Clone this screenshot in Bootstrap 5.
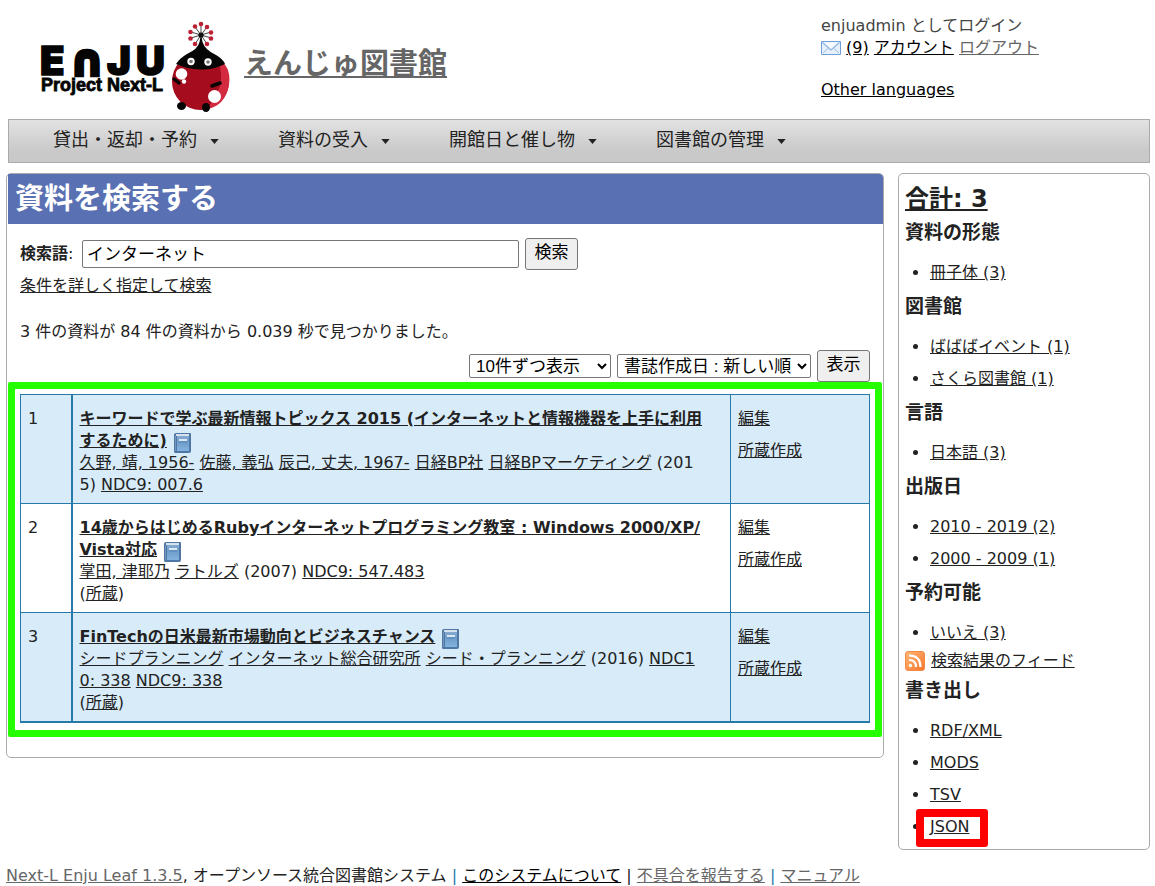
<!DOCTYPE html>
<html lang="ja">
<head>
<meta charset="utf-8">
<meta name="viewport" content="width=device-width, initial-scale=1">
<title>資料を検索する - えんじゅ図書館</title>
<link href="https://cdn.jsdelivr.net/npm/bootstrap@5.3.0/dist/css/bootstrap.min.css" rel="stylesheet">
<style>
  body { font-family: "DejaVu Sans", "Noto Sans CJK JP", sans-serif; font-size: 16px; line-height: 22px; color: #222; background: #fff; }
  a { color: #222; }
  a:hover { color: #2779aa; }
  .page-wrap { padding: 0 5px 0 6px; }
  .site-head { height: 119px; }
  .site-logo { width: 238px; height: 100px; margin-top: 15px; }
  .site-title { font-size: 29px; line-height: 40px; font-weight: 700; margin-top: 44px; }
  .site-title a, .muted-link { color: #666; }
  .user-box { width: 329px; padding-top: 15px; color: #444; }
  .user-box a:not(.muted-link), .dark-link { color: #000; }
  .lang-link { margin-top: 20px; }
  .mail-icon { width: 20px; height: 14px; vertical-align: -2px; }
  .menu-bar { margin-left: 2px; height: 44px; padding: 0 44px; gap: 59px; border: 1px solid #aaa; background: linear-gradient(#e2e2e2, #c9c9c9 75%); font-size: 18px; }
  .menu-bar button { border: 0; background: none; padding: 0 0 3px; color: #222; gap: 13px; }
  .menu-bar svg { width: 9px; height: 5px; margin-top: 3px; }
  .body-row { margin-top: 10px; gap: 14px; }
  .panel { border: 1px solid #aaa; border-radius: 5px; }
  .main-panel { padding: 0 0 34px 1px; }
  .page-title { background: #5970b2; color: #fff; font-size: 29px; line-height: 50px; font-weight: 700; padding-left: 7px; border-top-right-radius: 4px; }
  .content-area { padding: 14px 13px 0 12px; }
  .query-label { min-width: 56px; }
  .field, .plain-btn, .picker { font-family: "Liberation Sans", "Noto Sans CJK JP", sans-serif; font-size: 17px; line-height: 20px; color: #000; border: 1px solid #767676; }
  .field { width: 437px; height: 28px; padding: 0 4px 3px; border-radius: 2px; background: #fff; margin: 0 6px; }
  .plain-btn { background: #efefef; border-radius: 3px; width: 53px; height: 32px; padding: 0 0 2px; }
  .picker { height: 24px; border-radius: 2px; background: #fff; padding: 0 2px; }
  .picker-count { width: 142px; }
  .picker-order { width: 194px; }
  .adv-link { margin-top: 5px; }
  .sort-row { margin-top: 7px; gap: 6px; }
  .marked { margin-top: 12px; }
  .marked::after { content: ""; position: absolute; inset: -12px -12px -14px -12px; border: 7px solid #26ff00; border-radius: 2px; pointer-events: none; }
  .results { width: 100%; table-layout: fixed; border-collapse: collapse; border: 1px solid #2779aa; border-bottom-width: 2px; }
  .results td { border: 1px solid #2779aa; padding: 13px 6px 7px 7px; vertical-align: top; word-break: break-all; }
  .results td:first-child { width: 51px; border-right-width: 2px; }
  .results td:last-child { width: 139px; }
  .results tr:nth-child(odd) { background: #d7ebf9; }
  .results strong { font-weight: 700; }
  .book-icon { width: 19px; height: 20px; vertical-align: -5px; margin: -2px 0 -2px 1px; }
  .act { display: block; margin-bottom: 10px; }
  .side-panel { width: 252px; flex: none; padding: 6px 6px 2px; }
  .side-total { font-size: 24px; line-height: 38px; font-weight: 700; margin: 0 0 1px; }
  .side-head { font-size: 19px; line-height: 26px; font-weight: 700; margin: 0; }
  .side-list { margin: 12px 0 4px; padding-left: 25px; }
  .side-list li { padding: 5px 0; }
  .feed { margin: -3px 0 5px; gap: 6px; }
  .red-mark::after { content: ""; position: absolute; inset: -8px -19px -11px -14px; border: 8px solid #f00; border-radius: 3px; pointer-events: none; }
  .site-foot { margin-top: 15px; white-space: nowrap; }
  .sep { color: #2779aa; }
</style>
</head>
<body>
<svg class="position-absolute" width="0" height="0" aria-hidden="true">
  <defs>
    <linearGradient id="cover" x1="0" y1="0" x2="0" y2="1"><stop offset="0" stop-color="#86abcf"/><stop offset=".4" stop-color="#6f9cc9"/><stop offset="1" stop-color="#82b3df"/></linearGradient>
    <symbol id="book" viewBox="0 0 19 20">
      <path d="M3 0H17Q18 0 18 1V18Q18 20 16 20H2Q1 20 1 18V2Q1 0 3 0Z" fill="#4f77a6"/>
      <path d="M3 1H16V3H3Z" fill="#d7e2ed"/>
      <path d="M4 3H16V18H4Z" fill="url(#cover)"/>
      <path d="M2 3H3V18H2Z" fill="#7396bd"/>
      <path d="M6 6H14V8H6Z" fill="#d9eaf5"/>
      <path d="M6 9H14" stroke="#5685b5"/>
    </symbol>
  </defs>
</svg>
<div class="page-wrap">
  <header class="site-head d-flex">
    <svg class="site-logo flex-shrink-0" viewBox="6 15 238 100" role="img" aria-label="Enju Project Next-L">
      <g fill="#050505" stroke="#050505" font-family="Inter, sans-serif" font-weight="900">
        <g font-size="40" stroke-width="1.5"><text x="40" y="75">E</text><text x="70" y="75" font-family="DejaVu Sans, sans-serif" font-size="42" stroke-width="4">∩</text><text x="107" y="75">J</text><text x="136" y="75">U</text></g>
        <text x="41" y="91" font-family="Liberation Sans, sans-serif" font-size="18" stroke-width=".8">Project Next-L</text>
      </g>
      <g stroke="#444" stroke-width="1"><path d="M201 35V24M201 35L207 27M201 35L211 32M201 35L211 38M201 35L207 44M201 35L195 44M201 35L191 38M201 35L191 32M201 35L195 27"/></g>
      <g fill="#bd2136"><circle cx="201" cy="24" r="2.3"/><circle cx="207" cy="27" r="2.3"/><circle cx="211" cy="32.500" r="2.3"/><circle cx="211" cy="38.500" r="2.3"/><circle cx="207" cy="44" r="2.3"/><circle cx="195" cy="44" r="2.3"/><circle cx="190.500" cy="38.500" r="2.3"/><circle cx="190.500" cy="32" r="2.3"/><circle cx="195" cy="26.500" r="2.3"/></g>
      <circle cx="200.500" cy="81.500" r="28.500" fill="#a50d1e"/>
      <path d="M216 57Q232 66 229 85Q225 106 207 109Q220 93 221 80Q222 68 216 57Z" fill="#d42a40"/>
      <path d="M201 34L202.500 42Q205 50 216 55Q223 59 225 64Q213 70 200 69.500Q187 69 176 64Q180 58 187 54Q198 49 199.500 42Z" fill="#050505"/>
      <circle cx="201" cy="35" r="2.600" fill="#111"/>
      <g fill="#fff"><circle cx="191" cy="61.500" r="3.700"/><circle cx="208" cy="62" r="3.700"/><circle cx="181.500" cy="74" r="5.800"/><circle cx="184" cy="81.500" r="2.200"/><circle cx="214.500" cy="96.500" r="6.500"/></g>
      <g fill="#777"><circle cx="191" cy="61.500" r="1.800"/><circle cx="208" cy="62" r="1.800"/></g>
      <path d="M174 79L179 83M212 86L220 83" stroke="#050505" stroke-width="3.500" stroke-linecap="round"/>
      <g fill="#050505"><ellipse cx="181.500" cy="106" rx="4.500" ry="4"/><ellipse cx="206" cy="107.500" rx="4" ry="4.500"/></g>
    </svg>
    <div class="site-title flex-grow-1"><a href="#">えんじゅ図書館</a></div>
    <div class="user-box">
      <div>enjuadmin としてログイン</div>
      <div>
        <svg class="mail-icon" viewBox="0 0 20 14" aria-hidden="true"><path d="M.5.5H19.500V13.500H.5Z" fill="#e6f0fb" stroke="#6f9ed8"/><path d="M2 12L7.500 7M18 12L12.500 7" stroke="#9dc0eb" fill="none"/><path d="M1.500 1.500L10 9L18.500 1.500" fill="#f7fbff" stroke="#8fb4e4" stroke-width="1.300"/></svg>
        <a href="#">(9)</a> <a href="#">アカウント</a> <a href="#" class="muted-link">ログアウト</a>
      </div>
      <div class="lang-link"><a href="#">Other languages</a></div>
    </div>
  </header>

  <nav class="menu-bar d-flex align-items-center" aria-label="メニュー">
    <button type="button" class="d-flex align-items-center">貸出・返却・予約<svg viewBox="0 0 10 6"><path d="M0 0H10L5 6Z" fill="#222"/></svg></button>
    <button type="button" class="d-flex align-items-center">資料の受入<svg viewBox="0 0 10 6"><path d="M0 0H10L5 6Z" fill="#222"/></svg></button>
    <button type="button" class="d-flex align-items-center">開館日と催し物<svg viewBox="0 0 10 6"><path d="M0 0H10L5 6Z" fill="#222"/></svg></button>
    <button type="button" class="d-flex align-items-center">図書館の管理<svg viewBox="0 0 10 6"><path d="M0 0H10L5 6Z" fill="#222"/></svg></button>
  </nav>

  <div class="body-row d-flex align-items-start">
    <main class="panel main-panel flex-grow-1">
      <h1 class="page-title mb-0">資料を検索する</h1>
      <div class="content-area">
        <form>
          <div class="d-flex align-items-center">
            <label for="query" class="query-label"><strong>検索語</strong>:</label>
            <input id="query" class="field" type="text" value="インターネット">
            <button type="button" class="plain-btn">検索</button>
          </div>
          <div class="adv-link"><a href="#">条件を詳しく指定して検索</a></div>
        </form>
        <p class="mt-4 mb-0">3 件の資料が 84 件の資料から 0.039 秒で見つかりました。</p>
        <form class="sort-row d-flex align-items-center justify-content-end">
          <select class="picker picker-count" aria-label="表示件数"><option>10件ずつ表示</option></select>
          <select class="picker picker-order" aria-label="並び順"><option>書誌作成日 : 新しい順</option></select>
          <button type="button" class="plain-btn">表示</button>
        </form>
        <div class="marked position-relative">
          <table class="results">
            <tbody>
              <tr>
                <td>1</td>
                <td><strong><a href="#">キーワードで学ぶ最新情報トピックス 2015 (インターネットと情報機器を上手に利用<br>するために)</a></strong> <svg class="book-icon"><use href="#book"/></svg><br>
                  <a href="#">久野, 靖, 1956-</a> <a href="#">佐藤, 義弘</a> <a href="#">辰己, 丈夫, 1967-</a> <a href="#">日経BP社</a> <a href="#">日経BPマーケティング</a> (201<br>5) <a href="#">NDC9: 007.6</a></td>
                <td><a href="#"><span class="act">編集</span></a><a href="#">所蔵作成</a></td>
              </tr>
              <tr>
                <td>2</td>
                <td><strong><a href="#">14歳からはじめるRubyインターネットプログラミング教室 : Windows 2000/XP/<br>Vista対応</a></strong> <svg class="book-icon"><use href="#book"/></svg><br>
                  <a href="#">掌田, 津耶乃</a> <a href="#">ラトルズ</a> (2007) <a href="#">NDC9: 547.483</a><br>(<a href="#">所蔵</a>)</td>
                <td><a href="#"><span class="act">編集</span></a><a href="#">所蔵作成</a></td>
              </tr>
              <tr>
                <td>3</td>
                <td><strong><a href="#">FinTechの日米最新市場動向とビジネスチャンス</a></strong> <svg class="book-icon"><use href="#book"/></svg><br>
                  <a href="#">シードプランニング</a> <a href="#">インターネット総合研究所</a> <a href="#">シード・プランニング</a> (2016) <a href="#">NDC1<br>0: 338</a> <a href="#">NDC9: 338</a><br>(<a href="#">所蔵</a>)</td>
                <td><a href="#"><span class="act">編集</span></a><a href="#">所蔵作成</a></td>
              </tr>
            </tbody>
          </table>
        </div>
      </div>
    </main>

    <aside class="panel side-panel">
      <h2 class="side-total"><a href="#">合計: 3</a></h2>
      <h3 class="side-head">資料の形態</h3>
      <ul class="side-list"><li><a href="#">冊子体 (3)</a></li></ul>
      <h3 class="side-head">図書館</h3>
      <ul class="side-list"><li><a href="#">ばばばイベント (1)</a></li><li><a href="#">さくら図書館 (1)</a></li></ul>
      <h3 class="side-head">言語</h3>
      <ul class="side-list"><li><a href="#">日本語 (3)</a></li></ul>
      <h3 class="side-head">出版日</h3>
      <ul class="side-list"><li><a href="#">2010 - 2019 (2)</a></li><li><a href="#">2000 - 2009 (1)</a></li></ul>
      <h3 class="side-head">予約可能</h3>
      <ul class="side-list"><li><a href="#">いいえ (3)</a></li></ul>
      <div class="feed d-flex align-items-center">
        <svg width="20" height="20" viewBox="0 0 20 20" aria-hidden="true"><defs><linearGradient id="rss" x1="0" y1="0" x2="1" y2="1"><stop offset="0" stop-color="#ffb877"/><stop offset="1" stop-color="#f5752c"/></linearGradient></defs><rect x=".5" y=".5" width="19" height="19" rx="2.500" fill="url(#rss)" stroke="#f58a45"/><g fill="none" stroke="#fff" stroke-width="2.200"><path d="M4 9Q11 9 11 16M4 4.500Q15.500 4.500 15.500 16"/></g><circle cx="5.500" cy="14.500" r="1.700" fill="#fff"/></svg>
        <a href="#">検索結果のフィード</a>
      </div>
      <h3 class="side-head">書き出し</h3>
      <ul class="side-list"><li><a href="#">RDF/XML</a></li><li><a href="#">MODS</a></li><li><a href="#">TSV</a></li><li><a href="#" class="red-mark position-relative">JSON</a></li></ul>
    </aside>
  </div>

  <footer class="site-foot"><a href="#" class="muted-link">Next-L Enju Leaf 1.3.5</a>, オープンソース統合図書館システム <span class="sep">|</span> <a href="#" class="dark-link">このシステムについて</a> | <a href="#" class="muted-link">不具合を報告する</a> <span class="sep">|</span> <a href="#" class="muted-link">マニュアル</a></footer>
</div>
<script src="https://cdn.jsdelivr.net/npm/bootstrap@5.3.0/dist/js/bootstrap.bundle.min.js"></script>
</body>
</html>
